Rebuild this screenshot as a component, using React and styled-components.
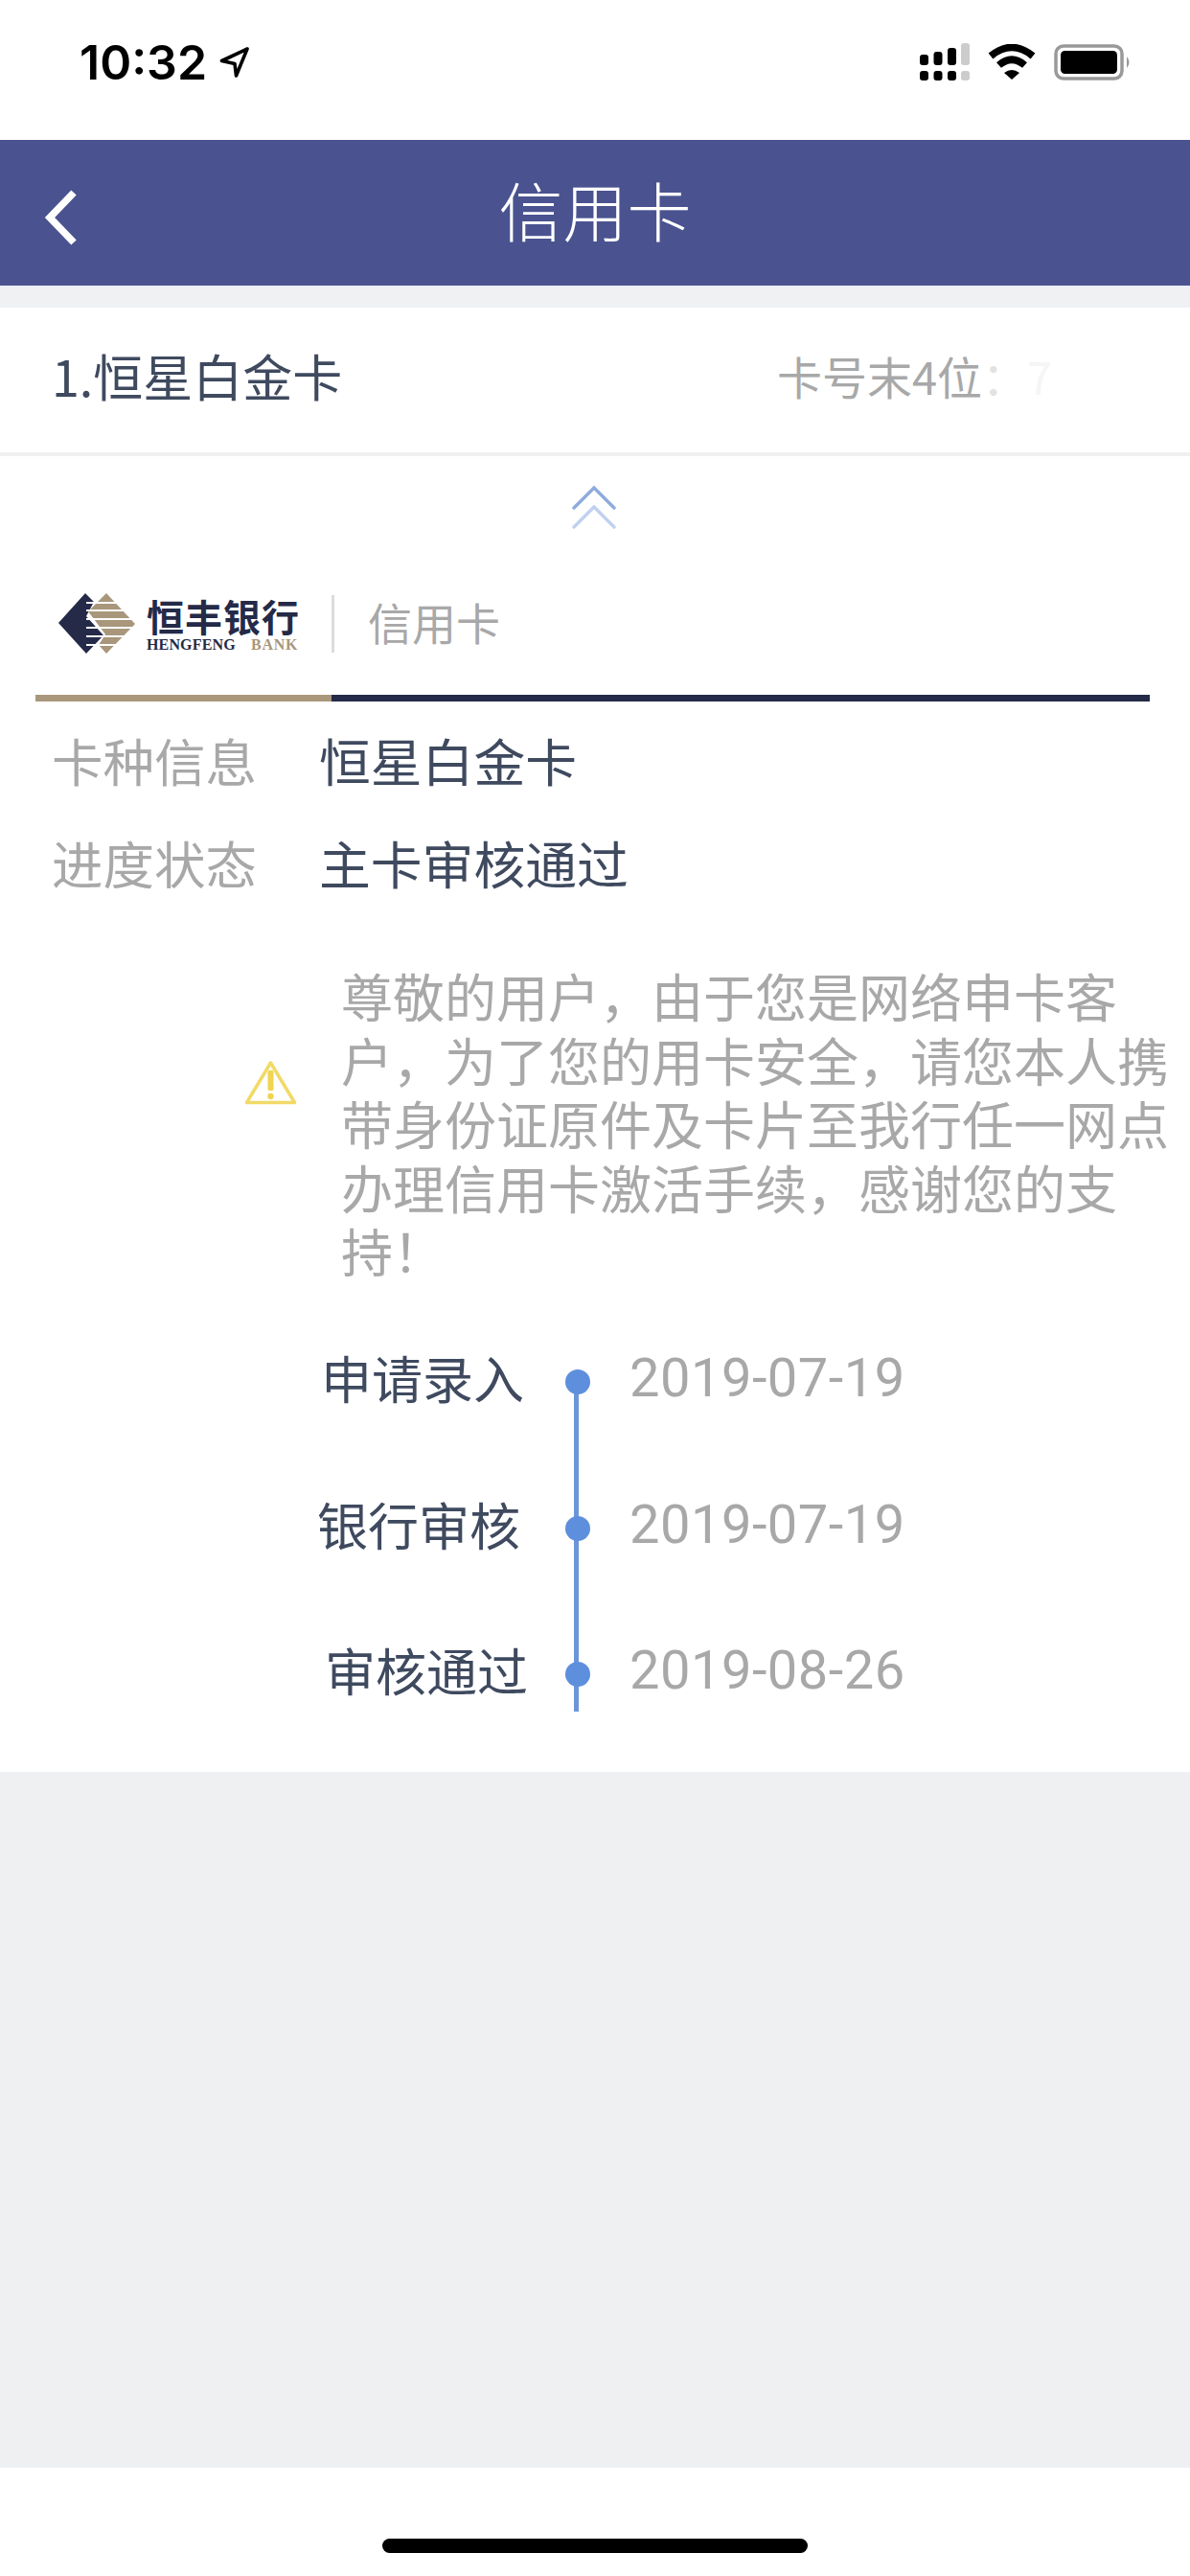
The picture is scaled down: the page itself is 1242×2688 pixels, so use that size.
import styled, { createGlobalStyle } from "styled-components";

const CJK = `"Noto Sans CJK SC", "Noto Sans", sans-serif`;

const GlobalStyle = createGlobalStyle`
  html, body {
    margin: 0;
    padding: 0;
    background: #ffffff;
  }
  * {
    box-sizing: border-box;
  }
`;

const steps = [
  { label: "申请录入", date: "2019-07-19", indent: 4 },
  { label: "银行审核", date: "2019-07-19", indent: 0 },
  { label: "审核通过", date: "2019-08-26", indent: 8 },
];

function SignalIcon() {
  const cols = [
    { x: 0, top: 12, fill: "#000" },
    { x: 14.5, top: 9, fill: "#000" },
    { x: 29, top: 5, fill: "#000" },
    { x: 43, top: 0, fill: "#cccccc" },
  ];
  return (
    <svg width="52" height="39" viewBox="0 0 52 39">
      {cols.map((c) => (
        <g key={c.x} fill={c.fill}>
          <rect x={c.x} y={c.top} width="9" height={23 - c.top} rx="3" />
          <rect x={c.x} y="29" width="9" height="10" rx="3" />
        </g>
      ))}
    </svg>
  );
}

function WifiIcon() {
  return (
    <svg width="50" height="37" viewBox="0 0 50 37">
      <path d="M3 12.5 Q25 -5.5 47 12.5" fill="none" stroke="#000" strokeWidth="7.5" />
      <path d="M11.5 22 Q25 10.5 38.5 22" fill="none" stroke="#000" strokeWidth="7.5" />
      <path d="M17 30 Q25 24 33 30 L25 37 Z" fill="#000" />
    </svg>
  );
}

function BatteryIcon() {
  return (
    <svg width="82" height="38" viewBox="0 0 82 38">
      <rect x="2" y="2" width="69" height="34" rx="8" fill="none" stroke="#999999" strokeWidth="3.5" />
      <rect x="7" y="7" width="59" height="24" rx="4.5" fill="#000" />
      <path d="M76 13 Q81 19 76 25 Z" fill="#999999" />
    </svg>
  );
}

function LocationArrow() {
  return (
    <svg width="33" height="34" viewBox="226 49 33 34">
      <path
        d="M256 52 L229.5 64.5 L243 67.5 L244.5 80 Z"
        fill="none"
        stroke="#000"
        strokeWidth="3.6"
        strokeLinejoin="round"
      />
    </svg>
  );
}

function BackIcon() {
  return (
    <svg width="34" height="58" viewBox="0 0 34 58">
      <path d="M31 3 L6 29 L31 55" fill="none" stroke="#fff" strokeWidth="7.5" />
    </svg>
  );
}

function ChevronsUp() {
  return (
    <svg width="48" height="46" viewBox="0 0 48 46">
      <path d="M3 24 L24 3 L45 24" fill="none" stroke="#8fabdd" strokeWidth="3.4" strokeLinecap="round" />
      <path d="M3 44 L24 23 L45 44" fill="none" stroke="#c0d1ef" strokeWidth="3.4" strokeLinecap="round" />
    </svg>
  );
}

function BankMark() {
  return (
    <svg width="81" height="63" viewBox="60 619 81 63">
      <path d="M61 650 L89 619 L98 628 L90 643 L108 663 L90 682 Z" fill="#242a47" />
      <path d="M92 638 L111 619 L141 651 L111 682 L103 673 L110 662 Z" fill="#a8977a" />
      <g fill="#ffffff">
        <rect x="90" y="628" width="52" height="2" />
        <rect x="90" y="636" width="52" height="2" />
        <rect x="90" y="645" width="52" height="2" />
        <rect x="90" y="654" width="52" height="2" />
        <rect x="90" y="663" width="52" height="2" />
        <rect x="90" y="672" width="52" height="2" />
      </g>
    </svg>
  );
}

function WarningIcon() {
  return (
    <svg width="55" height="47" viewBox="0 0 55 47">
      <path
        d="M27.5 3 L52.5 44.5 L2.5 44.5 Z"
        fill="none"
        stroke="#f1da66"
        strokeWidth="3.5"
        strokeLinejoin="round"
      />
      <rect x="24.5" y="11" width="6" height="21" rx="1.5" fill="#f1d44f" />
      <circle cx="27.5" cy="38" r="3.2" fill="#f1d44f" />
    </svg>
  );
}

export default function App() {
  return (
    <Page>
      <GlobalStyle />
      <StatusBar>
        <TimeGroup>
          <Clock>10:32</Clock>
          <LocationArrow />
        </TimeGroup>
        <StatusIcons>
          <SignalIcon />
          <WifiIcon />
          <BatteryIcon />
        </StatusIcons>
      </StatusBar>

      <NavBar>
        <BackButton>
          <BackIcon />
        </BackButton>
        <NavTitle>信用卡</NavTitle>
      </NavBar>

      <Strip />

      <CardRow>
        <CardName>1.恒星白金卡</CardName>
        <CardMeta>
          卡号末4位
          <MaskedColon>：</MaskedColon>
          <MaskedDigits>7</MaskedDigits>
        </CardMeta>
      </CardRow>

      <Panel>
        <Collapse>
          <ChevronsUp />
        </Collapse>

        <BrandRow>
          <BankMark />
          <BrandText>
            <BrandCn>恒丰银行</BrandCn>
            <BrandEn>
              HENGFENG <BrandEnGold>BANK</BrandEnGold>
            </BrandEn>
          </BrandText>
          <BrandDivider />
          <BrandTag>信用卡</BrandTag>
        </BrandRow>

        <ColorBar>
          <BarGold />
          <BarNavy />
        </ColorBar>

        <InfoList>
          <InfoRow>
            <InfoLabel>卡种信息</InfoLabel>
            <InfoValue>恒星白金卡</InfoValue>
          </InfoRow>
          <InfoRow>
            <InfoLabel>进度状态</InfoLabel>
            <InfoValue>主卡审核通过</InfoValue>
          </InfoRow>
        </InfoList>

        <Notice>
          <NoticeIcon>
            <WarningIcon />
          </NoticeIcon>
          <NoticeText>
            尊敬的用户，由于您是网络申卡客户，为了您的用卡安全，请您本人携带身份证原件及卡片至我行任一网点办理信用卡激活手续，感谢您的支持！
          </NoticeText>
        </Notice>

        <Timeline>
          <Rail />
          {steps.map((s) => (
            <Step key={s.label}>
              <StepLabel $indent={s.indent}>{s.label}</StepLabel>
              <StepDot />
              <StepDate>{s.date}</StepDate>
            </Step>
          ))}
        </Timeline>
      </Panel>

      <Filler />

      <HomeArea>
        <HomeBar />
      </HomeArea>
    </Page>
  );
}

/* ---------------- styled ---------------- */
const Page = styled.div`
  width: 1242px;
  height: 2688px;
  display: flex;
  flex-direction: column;
  overflow: hidden;
  background: #ffffff;
  font-family: ${CJK};
`;

const StatusBar = styled.div`
  height: 146px;
  flex: none;
  display: flex;
  justify-content: space-between;
  align-items: flex-start;
  padding: 45px 60px 0 83px;
`;

const TimeGroup = styled.div`
  display: flex;
  align-items: center;
  gap: 12px;
  height: 40px;
`;

const Clock = styled.span`
  font-family: Inter, "Liberation Sans", sans-serif;
  font-size: 50px;
  font-weight: 600;
  line-height: 40px;
  color: #000000;
`;

const StatusIcons = styled.div`
  display: flex;
  align-items: center;
  gap: 19px;
  height: 39px;
`;

const NavBar = styled.div`
  height: 152px;
  flex: none;
  display: grid;
  grid-template-columns: 1fr auto 1fr;
  align-items: center;
  background: #4a5390;
  color: #ffffff;
`;

const BackButton = styled.div`
  display: flex;
  padding: 9px 0 0 46px;
`;

const NavTitle = styled.div`
  padding-bottom: 10px;
  font-size: 67px;
  font-weight: 300;
  line-height: 1;
`;

const Strip = styled.div`
  height: 23px;
  flex: none;
  background: #f0f1f3;
  border-top: 3px solid #edf0fa;
`;

const CardRow = styled.div`
  height: 155px;
  flex: none;
  display: flex;
  justify-content: space-between;
  align-items: center;
  padding: 0 0 10px 54px;
  border-bottom: 4px solid #f0f0f0;
`;

const CardName = styled.div`
  font-size: 52px;
  font-weight: 400;
  color: #3f4a5f;
`;

const CardMeta = styled.div`
  display: flex;
  align-items: center;
  font-size: 47px;
  font-weight: 400;
  color: #a8a8a8;
`;

const MaskedColon = styled.span`
  width: 47px;
  color: #e2e2e2;
`;

const MaskedDigits = styled.span`
  width: 170px;
  color: #f5f5f5;
`;

const Panel = styled.div`
  height: 1373px;
  flex: none;
  display: flex;
  flex-direction: column;
  background: #ffffff;
  padding-top: 30px;
`;

const Collapse = styled.div`
  display: flex;
  justify-content: center;
  height: 46px;
  padding-right: 2px;
`;

const BrandRow = styled.div`
  display: flex;
  align-items: center;
  height: 63px;
  margin-top: 67px;
  padding-left: 60px;
`;

const BrandText = styled.div`
  display: flex;
  flex-direction: column;
  margin-left: 12px;
  width: 160px;
`;

const BrandCn = styled.div`
  font-size: 39px;
  font-weight: 700;
  line-height: 44px;
  letter-spacing: 1px;
  color: #242a47;
  white-space: nowrap;
`;

const BrandEn = styled.div`
  font-family: "Liberation Serif", serif;
  font-size: 16px;
  font-weight: 700;
  line-height: 17px;
  letter-spacing: 0.15px;
  color: #242a47;
  white-space: pre;
`;

const BrandEnGold = styled.span`
  margin-left: 12px;
  letter-spacing: 0.8px;
  color: #a8977a;
`;

const BrandDivider = styled.div`
  width: 3px;
  height: 60px;
  margin-left: 33px;
  background: #dcdcdc;
`;

const BrandTag = styled.div`
  margin: 0 0 5px 35px;
  font-size: 46px;
  font-weight: 400;
  color: #a8a8a8;
`;

const ColorBar = styled.div`
  display: flex;
  height: 7px;
  margin: 43px 42px 0 37px;
`;

const BarGold = styled.div`
  width: 309px;
  background: #a8977a;
`;

const BarNavy = styled.div`
  flex: 1;
  background: #242a47;
`;

const InfoList = styled.div`
  display: flex;
  flex-direction: column;
  margin-top: 7px;
`;

const InfoRow = styled.div`
  display: grid;
  grid-template-columns: 279px 1fr;
  align-items: center;
  height: 107px;
  padding-left: 54px;
`;

const InfoLabel = styled.div`
  font-size: 53.5px;
  font-weight: 400;
  color: #a8a8a8;
`;

const InfoValue = styled.div`
  font-size: 53.8px;
  font-weight: 400;
  color: #3f4a5f;
`;

const Notice = styled.div`
  display: flex;
  margin-top: 53px;
  padding-left: 255px;
`;

const NoticeIcon = styled.div`
  flex: none;
  width: 55px;
  margin: 100px 46px 0 0;
`;

const NoticeText = styled.div`
  width: 880px;
  font-size: 54px;
  font-weight: 400;
  line-height: 66.6px;
  color: #a8a8a8;
`;

const Timeline = styled.div`
  position: relative;
  display: flex;
  flex-direction: column;
  margin-top: 27px;
  padding-left: 331px;
`;

const Rail = styled.div`
  position: absolute;
  left: 599px;
  top: 76px;
  width: 5px;
  height: 344px;
  background: #6b95d8;
`;

const Step = styled.div`
  display: grid;
  grid-template-columns: 259px 26px auto;
  align-items: center;
  height: 152.5px;
`;

const StepLabel = styled.div`
  padding-left: ${(p) => p.$indent}px;
  font-size: 53px;
  font-weight: 400;
  line-height: 60px;
  color: #3f4a5f;
  white-space: nowrap;
  margin-bottom: 10px;
`;

const StepDot = styled.div`
  position: relative;
  width: 26px;
  height: 26px;
  border-radius: 50%;
  background: #5d8fdc;
`;

const StepDate = styled.div`
  margin: 0 0 8px 41px;
  font-family: Roboto, sans-serif;
  font-size: 56px;
  font-weight: 400;
  line-height: 60px;
  letter-spacing: 0.5px;
  color: #a8a8a8;
`;

const Filler = styled.div`
  height: 726px;
  flex: none;
  background: #eff0f2;
`;

const HomeArea = styled.div`
  flex: 1;
  display: flex;
  justify-content: center;
  padding-top: 74px;
`;

const HomeBar = styled.div`
  width: 444px;
  height: 15px;
  border-radius: 8px;
  background: #000000;
`;
